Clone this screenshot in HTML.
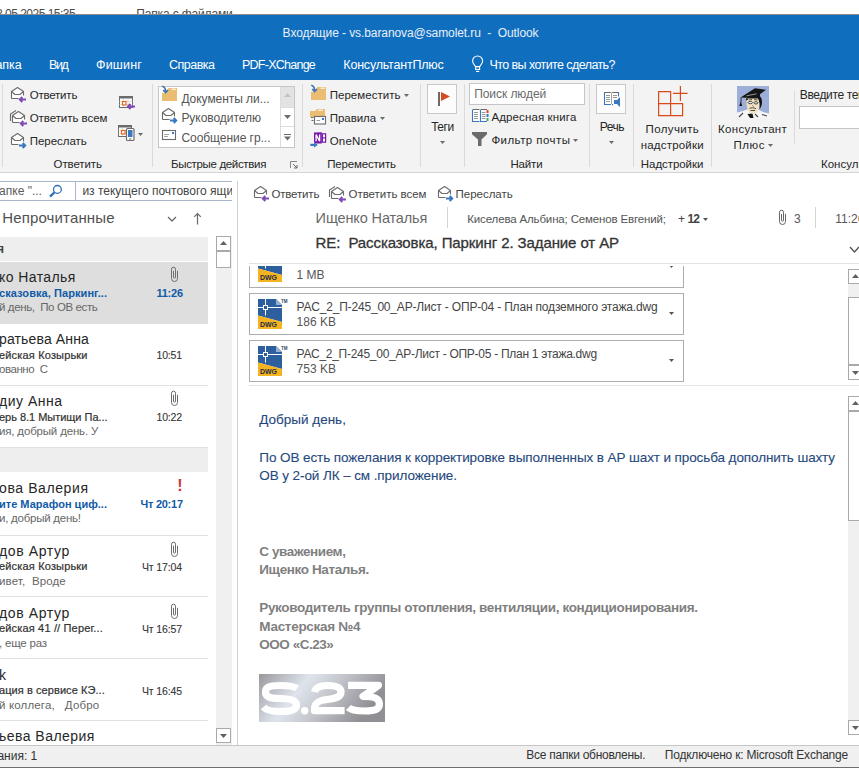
<!DOCTYPE html>
<html><head><meta charset="utf-8"><style>
html,body{margin:0;padding:0;width:859px;height:776px;overflow:hidden;background:#fff;position:relative;font-family:"Liberation Sans", sans-serif;}
.a{position:absolute;}
.t{position:absolute;white-space:pre;line-height:0;font-family:"Liberation Sans", sans-serif;}
svg.a{overflow:visible;}
</style></head><body>
<div class="a" style="left:0px;top:14px;width:859px;height:1px;background:#8c8c8c;"></div>
<div class="a" style="left:0px;top:15px;width:859px;height:65px;background:#106ebe;"></div>
<div class="a" style="left:0px;top:80px;width:859px;height:92px;background:#f3f3f3;"></div>
<div class="a" style="left:0px;top:172px;width:859px;height:1px;background:#d5d5d5;"></div>
<div class="a" style="left:2px;top:84px;width:1px;height:83px;background:#dadada;"></div>
<div class="a" style="left:152px;top:84px;width:1px;height:83px;background:#dadada;"></div>
<div class="a" style="left:302px;top:84px;width:1px;height:83px;background:#dadada;"></div>
<div class="a" style="left:420px;top:84px;width:1px;height:83px;background:#dadada;"></div>
<div class="a" style="left:464px;top:84px;width:1px;height:83px;background:#dadada;"></div>
<div class="a" style="left:589px;top:84px;width:1px;height:83px;background:#dadada;"></div>
<div class="a" style="left:633px;top:84px;width:1px;height:83px;background:#dadada;"></div>
<div class="a" style="left:711px;top:84px;width:1px;height:83px;background:#dadada;"></div>
<div class="a" style="left:794px;top:91px;width:1px;height:53px;background:#dadada;"></div>
<div class="a" style="left:158px;top:86px;width:137px;height:62px;background:#ffffff;border:1px solid #c6c6c6;box-sizing:border-box;"></div>
<div class="a" style="left:280px;top:87px;width:14px;height:20px;background:#e3e3e3;"></div>
<div class="a" style="left:280px;top:87px;width:1px;height:60px;background:#dcdcdc;"></div>
<div class="a" style="left:280px;top:107px;width:14px;height:1px;background:#dcdcdc;"></div>
<div class="a" style="left:280px;top:126px;width:14px;height:1px;background:#dcdcdc;"></div>
<div class="a" style="left:427px;top:84px;width:30px;height:30px;background:#fcfcfc;border:1px solid #c8c8c8;box-sizing:border-box;"></div>
<div class="a" style="left:469px;top:83px;width:116px;height:22px;background:#ffffff;border:1px solid #c6c6c6;box-sizing:border-box;"></div>
<div class="a" style="left:596px;top:84px;width:30px;height:30px;background:#fcfcfc;border:1px solid #c8c8c8;box-sizing:border-box;"></div>
<div class="a" style="left:799px;top:106px;width:80px;height:23px;background:#ffffff;border:1px solid #c6c6c6;box-sizing:border-box;"></div>
<div class="a" style="left:0px;top:181px;width:232px;height:1px;background:#a7b6c9;"></div>
<div class="a" style="left:0px;top:200px;width:232px;height:1px;background:#a7b6c9;"></div>
<div class="a" style="left:75px;top:181px;width:1px;height:20px;background:#a7b6c9;"></div>
<div class="a" style="left:0px;top:237px;width:208px;height:24px;background:#eeeeee;"></div>
<div class="a" style="left:0px;top:262px;width:208px;height:62px;background:#dedede;"></div>
<div class="a" style="left:0px;top:385px;width:208px;height:1px;background:#e1e1e1;"></div>
<div class="a" style="left:0px;top:447px;width:208px;height:25px;background:#eeeeee;"></div>
<div class="a" style="left:0px;top:447px;width:208px;height:1px;background:#e1e1e1;"></div>
<div class="a" style="left:0px;top:535px;width:208px;height:1px;background:#e1e1e1;"></div>
<div class="a" style="left:0px;top:596px;width:208px;height:1px;background:#e1e1e1;"></div>
<div class="a" style="left:0px;top:658px;width:208px;height:1px;background:#e1e1e1;"></div>
<div class="a" style="left:0px;top:720px;width:208px;height:1px;background:#e1e1e1;"></div>
<div class="a" style="left:216px;top:236px;width:16px;height:509px;background:#f0f0f0;"></div>
<div class="a" style="left:216px;top:236px;width:15px;height:15px;background:#ffffff;border:1px solid #a9a9a9;box-sizing:border-box;"></div>
<div class="a" style="left:216px;top:251px;width:15px;height:17px;background:#ffffff;border:1px solid #a9a9a9;box-sizing:border-box;"></div>
<div class="a" style="left:216px;top:728px;width:15px;height:15px;background:#ffffff;border:1px solid #a9a9a9;box-sizing:border-box;"></div>
<div class="a" style="left:237px;top:181px;width:1px;height:564px;background:#cfcfcf;"></div>
<div class="a" style="left:447px;top:207px;width:1px;height:21px;background:#d4d4d4;"></div>
<div class="a" style="left:815px;top:207px;width:1px;height:21px;background:#d4d4d4;"></div>
<div class="a" style="left:249px;top:263px;width:610px;height:1px;background:#e3e3e3;"></div>
<div class="a" style="left:249px;top:252px;width:435px;height:36px;background:#ffffff;border:1px solid #adadad;box-sizing:border-box;"></div>
<div class="a" style="left:249px;top:293px;width:435px;height:42px;background:#ffffff;border:1px solid #adadad;box-sizing:border-box;"></div>
<div class="a" style="left:249px;top:340px;width:435px;height:42px;background:#ffffff;border:1px solid #adadad;box-sizing:border-box;"></div>
<div class="a" style="left:848px;top:269px;width:12px;height:15px;background:#ffffff;border:1px solid #a9a9a9;box-sizing:border-box;"></div>
<div class="a" style="left:848px;top:284px;width:12px;height:13px;background:#f0f0f0;"></div>
<div class="a" style="left:848px;top:297px;width:12px;height:68px;background:#ffffff;border:1px solid #a9a9a9;box-sizing:border-box;"></div>
<div class="a" style="left:848px;top:365px;width:12px;height:15px;background:#ffffff;border:1px solid #a9a9a9;box-sizing:border-box;"></div>
<div class="a" style="left:249px;top:385px;width:610px;height:1px;background:#e3e3e3;"></div>
<svg class="a" style="left:259px;top:674px" width="126" height="48" viewBox="0 0 126 48" fill="none"><defs><linearGradient id="lg" x1="0" y1="0" x2="1" y2="0.3"><stop offset="0" stop-color="#98989c"/><stop offset="0.38" stop-color="#dfe4ec"/><stop offset="0.62" stop-color="#c5c7cd"/><stop offset="1" stop-color="#8f8f94"/></linearGradient></defs><rect width="126" height="48" fill="url(#lg)"/><g stroke="#fff" stroke-width="7.2" fill="none" stroke-linejoin="round"><path d="M38,14.5 C35,12 29,11.5 21,11.5 C10,11.5 6.5,13.5 6.5,18 C6.5,23 11,24.5 21,24.5 C32,24.5 37.5,26.5 37.5,31 C37.5,36 32,37.5 21,37.5 C11,37.5 7,36 4.5,33"/><path d="M55.5,18 C56.5,13 61,11.5 69,11.5 C78,11.5 82,13.5 82,18 C82,23 77,24.5 68,25.5 C59,26.5 55.5,29 55.5,35 V36.7 H85.6"/><path d="M89,11.3 H119.5 L104,22.5 C117,22.5 120.4,25 120.4,30 C120.4,35.5 116,37 106,37 C96,37 92,36 89.5,33.5"/></g><circle cx="45.7" cy="36.7" r="3.7" fill="#fff"/></svg>
<div class="a" style="left:848px;top:396px;width:12px;height:339px;background:#f0f0f0;"></div>
<div class="a" style="left:848px;top:396px;width:12px;height:15px;background:#ffffff;border:1px solid #a9a9a9;box-sizing:border-box;"></div>
<div class="a" style="left:848px;top:411px;width:12px;height:110px;background:#ffffff;border:1px solid #a9a9a9;box-sizing:border-box;"></div>
<div class="a" style="left:848px;top:720px;width:12px;height:15px;background:#ffffff;border:1px solid #a9a9a9;box-sizing:border-box;"></div>
<div class="a" style="left:0px;top:745px;width:859px;height:22px;background:#f0f0f0;"></div>
<div class="a" style="left:0px;top:745px;width:859px;height:1px;background:#c6c6c6;"></div>
<div class="a" style="left:0px;top:767px;width:859px;height:1px;background:#6e6e6e;"></div>
<svg class="a" style="left:10px;top:86px" width="18" height="18" viewBox="0 0 18 18" fill="none"><path d="M1.5,12.5 V5.5 L7.5,1.5 L13.5,5.5 V12.5 Z" fill="#fff"/><path d="M1.5,12.5 V5.5 L7.5,1.5 L13.5,5.5 V9.5 M1.5,12.5 H8.5 M1.5,5.5 L5,8.5 H10 L13.5,5.5" stroke="#6b6b6b" stroke-width="1.1" stroke-linejoin="round"/><path d="M10,13.5 H16 M12.3,11 L9.8,13.5 L12.3,16" stroke="#7e4bb5" stroke-width="2"/></svg>
<svg class="a" style="left:10px;top:109px" width="18" height="18" viewBox="0 0 18 18" fill="none"><g transform="translate(1,1)"><path d="M1.5,12.5 V5.5 L7.5,1.5 L13.5,5.5 V12.5 Z" fill="#fff"/><path d="M1.5,12.5 V5.5 L7.5,1.5 L13.5,5.5 V9.5 M1.5,12.5 H8.5 M1.5,5.5 L5,8.5 H10 L13.5,5.5" stroke="#6b6b6b" stroke-width="1.1" stroke-linejoin="round"/></g><path d="M0.5,12 V5 L6,1.5" stroke="#6b6b6b" stroke-width="1.1"/><path d="M11,14.5 H17 M13.3,12 L10.8,14.5 L13.3,17" stroke="#7e4bb5" stroke-width="2"/></svg>
<svg class="a" style="left:10px;top:132px" width="18" height="18" viewBox="0 0 18 18" fill="none"><path d="M1.5,12.5 V5.5 L7.5,1.5 L13.5,5.5 V12.5 Z" fill="#fff"/><path d="M1.5,12.5 V5.5 L7.5,1.5 L13.5,5.5 V9.5 M1.5,12.5 H8.5 M1.5,5.5 L5,8.5 H10 L13.5,5.5" stroke="#6b6b6b" stroke-width="1.1" stroke-linejoin="round"/><path d="M9,13.5 H15 M12.7,11 L15.2,13.5 L12.7,16" stroke="#3a77bf" stroke-width="2"/></svg>
<svg class="a" style="left:119px;top:96px" width="17" height="17" viewBox="0 0 17 17" fill="none"><rect x="0.5" y="0.5" width="13" height="11" fill="#fff" stroke="#6b6b6b"/><rect x="0" y="0" width="14" height="2.5" fill="#6b6b6b"/><path d="M4.5,2.5 V11 M9,2.5 V11 M0.5,5.5 H13.5 M0.5,8.5 H13.5" stroke="#bbb" stroke-dasharray="1,1"/><rect x="3.5" y="5.5" width="3.5" height="3.5" fill="#fff" stroke="#e06a1b" stroke-width="1.2"/><path d="M9.5,10.5 H16 M11.5,8 L9,10.5 L11.5,13" stroke="#7e4bb5" stroke-width="2"/></svg>
<svg class="a" style="left:118px;top:125px" width="17" height="17" viewBox="0 0 17 17" fill="none"><rect x="0.5" y="0.5" width="13" height="11" fill="#fff" stroke="#6b6b6b"/><rect x="0" y="0" width="14" height="2.5" fill="#6b6b6b"/><path d="M4.5,2.5 V11 M9,2.5 V11 M0.5,5.5 H13.5 M0.5,8.5 H13.5" stroke="#bbb" stroke-dasharray="1,1"/><rect x="3.5" y="5.5" width="3.5" height="3.5" fill="#fff" stroke="#e06a1b" stroke-width="1.2"/><rect x="8.5" y="3.5" width="7.5" height="12" rx="1" fill="#fff" stroke="#6b6b6b" stroke-width="1.2"/><rect x="10" y="5" width="4.5" height="7" fill="#3a77bf"/><path d="M11,14 H13.5" stroke="#6b6b6b"/></svg>
<svg class="a" style="left:138px;top:132.5px" width="5" height="3" viewBox="0 0 5 3" fill="none"><path d="M0,0 H5 L2.5,3 Z" fill="#6b6b6b"/></svg>
<svg class="a" style="left:161px;top:86px" width="17" height="16" viewBox="0 0 17 16" fill="none"><path d="M1,6.7 H5 L7.5,2 H16 V15 H1 Z" fill="#ebbd72"/><path d="M10.5,3.2 H15" stroke="#fff" stroke-width="1"/><path d="M1.2,0.2 C3.6,0.6 4.6,2.2 4.6,5.6" stroke="#3a6fb3" stroke-width="1.6" fill="none"/><path d="M2.2,4 L4.6,6.6 L7,4" stroke="#3a6fb3" stroke-width="1.6" fill="none"/></svg>
<svg class="a" style="left:161px;top:107px" width="18" height="18" viewBox="0 0 18 18" fill="none"><path d="M1.5,12.5 V5.5 L7.5,1.5 L13.5,5.5 V12.5 Z" fill="#fff"/><path d="M1.5,12.5 V5.5 L7.5,1.5 L13.5,5.5 V9.5 M1.5,12.5 H8.5 M1.5,5.5 L5,8.5 H10 L13.5,5.5" stroke="#6b6b6b" stroke-width="1.1" stroke-linejoin="round"/><path d="M9,13.5 H15 M12.7,11 L15.2,13.5 L12.7,16" stroke="#3a77bf" stroke-width="2"/></svg>
<svg class="a" style="left:162px;top:130px" width="15" height="11" viewBox="0 0 15 11" fill="none"><rect x="0.5" y="0.5" width="13" height="9" stroke="#6b6b6b" stroke-width="1.1" fill="#fff"/><rect x="10" y="2" width="2" height="2" fill="#3a77bf"/><path d="M2,4.5 H7 M2,6.5 H6" stroke="#999" stroke-width="0.9"/></svg>
<svg class="a" style="left:284px;top:93px" width="7" height="4" viewBox="0 0 7 4" fill="none"><path d="M0,4 H7 L3.5,0 Z" fill="#c4c4c4"/></svg>
<svg class="a" style="left:284px;top:115px" width="7" height="4" viewBox="0 0 7 4" fill="none"><path d="M0,0 H7 L3.5,4 Z" fill="#6b6b6b"/></svg>
<svg class="a" style="left:284px;top:134px" width="7" height="7" viewBox="0 0 7 7" fill="none"><path d="M0,0.5 H7" stroke="#6b6b6b"/><path d="M0,2.5 H7 L3.5,6.5 Z" fill="#6b6b6b"/></svg>
<svg class="a" style="left:290px;top:161px" width="8" height="8" viewBox="0 0 8 8" fill="none"><path d="M0.5,7 V0.5 H7" stroke="#888"/><path d="M3,3 L7,7 M7,4 V7 H4" stroke="#666"/></svg>
<svg class="a" style="left:310px;top:85px" width="17" height="16" viewBox="0 0 17 16" fill="none"><path d="M1,6.7 H5 L7.5,2 H16 V15 H1 Z" fill="#ebbd72"/><path d="M10.5,3.2 H15" stroke="#fff" stroke-width="1"/><path d="M1.2,0.2 C3.6,0.6 4.6,2.2 4.6,5.6" stroke="#3a6fb3" stroke-width="1.6" fill="none"/><path d="M2.2,4 L4.6,6.6 L7,4" stroke="#3a6fb3" stroke-width="1.6" fill="none"/></svg>
<svg class="a" style="left:404px;top:94px" width="5" height="3" viewBox="0 0 5 3" fill="none"><path d="M0,0 H5 L2.5,3 Z" fill="#6b6b6b"/></svg>
<svg class="a" style="left:310px;top:108px" width="16" height="17" viewBox="0 0 16 17" fill="none"><path d="M0,3 H5 L7,1 H15 V9 H0 Z" fill="#ebbd72"/><path d="M8,2.2 H13" stroke="#fff"/><rect x="4.5" y="8.5" width="11" height="7.5" fill="#fff" stroke="#6b6b6b" stroke-width="1.1"/><path d="M6.5,12.5 H10" stroke="#999"/><rect x="12" y="10" width="2" height="2" fill="#3a77bf"/><path d="M1,9.5 H3.5 M1.5,12.5 H3.5" stroke="#6b6b6b" stroke-width="1.2"/></svg>
<svg class="a" style="left:380px;top:117px" width="5" height="3" viewBox="0 0 5 3" fill="none"><path d="M0,0 H5 L2.5,3 Z" fill="#6b6b6b"/></svg>
<svg class="a" style="left:310px;top:132px" width="17" height="17" viewBox="0 0 17 17" fill="none"><path d="M4,0.5 L11.8,0.2 V11.6 H6.5 C5,11.6 4,10.6 4,9.5 Z" fill="#7719aa"/><rect x="12.4" y="1.8" width="3.2" height="8.4" fill="#fff" stroke="#7719aa" stroke-width="1.2"/><path d="M12,5.9 H16" stroke="#7719aa" stroke-width="1.2"/><path d="M6.1,9.3 V2.6 L9.6,9.3 V2.6" stroke="#fff" stroke-width="1.3" fill="none"/><path d="M0.3,12.9 H5.5" stroke="#3a77bf" stroke-width="2.2"/><path d="M4,10.2 L7.9,12.9 L4,15.6 Z" fill="#3a77bf"/></svg>
<svg class="a" style="left:471px;top:55px" width="14" height="18" viewBox="0 0 14 18" fill="none"><path d="M4.6,11.6 C3.5,9.8 1.6,8.6 1.6,6 A5,5 0 0 1 11.6,6 C11.6,8.6 9.7,9.8 8.6,11.6 Z" stroke="#fff" stroke-width="1.1"/><rect x="4.6" y="11.6" width="4" height="2.9" stroke="#fff" stroke-width="1.1"/><path d="M5,16.5 H8.2" stroke="#fff" stroke-width="1.1"/></svg>
<svg class="a" style="left:438px;top:92px" width="14" height="16" viewBox="0 0 14 16" fill="none"><rect x="0" y="0" width="2" height="14" fill="#6b6b6b"/><path d="M3,0 L12,4.5 L3,9 Z" fill="#d54a23"/></svg>
<svg class="a" style="left:440px;top:141px" width="5" height="3" viewBox="0 0 5 3" fill="none"><path d="M0,0 H5 L2.5,3 Z" fill="#6b6b6b"/></svg>
<svg class="a" style="left:472px;top:109px" width="17" height="13" viewBox="0 0 17 13" fill="none"><rect x="0.5" y="0.5" width="7" height="12" fill="#fff"/><rect x="8.5" y="0.5" width="7" height="12" fill="#fff"/><path d="M0.5,1 V12.5 H7.5 M8.5,1 V12.5 H15" stroke="#3a77bf" stroke-width="1.1"/><path d="M0.5,0.5 H7.5 M8.5,0.5 H15" stroke="#6b6b6b" stroke-width="1.1"/><path d="M2,3.5 H6 M2,5.5 H6 M2,7.5 H6 M2,9.5 H6 M9.8,3.5 H13.5 M9.8,5.5 H13.5 M9.8,7.5 H13.5 M9.8,9.5 H13.5" stroke="#8a8a8a" stroke-width="0.9"/><rect x="14.5" y="1" width="2" height="3" fill="#d54a23"/><rect x="14.5" y="5" width="2" height="3" fill="#3a77bf"/><rect x="14.5" y="9" width="2" height="3" fill="#4ea172"/></svg>
<svg class="a" style="left:472px;top:132px" width="16" height="15" viewBox="0 0 16 15" fill="none"><path d="M0,0 H15 V2.2 L9.5,7.5 V14 H6 V7.5 L0,2.2 Z" fill="#6b6b6b"/></svg>
<svg class="a" style="left:573px;top:139px" width="5" height="3" viewBox="0 0 5 3" fill="none"><path d="M0,0 H5 L2.5,3 Z" fill="#6b6b6b"/></svg>
<svg class="a" style="left:603px;top:91px" width="18" height="17" viewBox="0 0 18 17" fill="none"><rect x="1" y="1.5" width="14.5" height="12" fill="#fff"/><path d="M1,1.5 H7.8 M9.2,1.5 H16" stroke="#6b6b6b" stroke-width="1"/><path d="M1.5,1.5 V13.5 H8" stroke="#3a77bf" stroke-width="1.1"/><path d="M8.5,1.5 V13" stroke="#9a9a9a" stroke-width="0.9"/><path d="M15.5,1.5 V5.5" stroke="#3a77bf" stroke-width="1.1"/><path d="M3,4.5 H7 M3,6.5 H7 M3,8.5 H7 M3,10.5 H7 M10,4.5 H14 M10,6.5 H14" stroke="#8a8a8a" stroke-width="0.9"/><path d="M11,9 H14 L17,6 V16 L14,13 H11 Z" fill="#3a77bf"/><rect x="9" y="13" width="1.2" height="1.2" fill="#3a77bf"/></svg>
<svg class="a" style="left:609px;top:141px" width="5" height="3" viewBox="0 0 5 3" fill="none"><path d="M0,0 H5 L2.5,3 Z" fill="#6b6b6b"/></svg>
<svg class="a" style="left:658px;top:91px" width="31" height="26" viewBox="0 0 31 26" fill="none"><path d="M0.6,0.6 H12.6 V12.6 H0.6 Z M0.6,12.6 V24.6 H12.6 V12.6 M12.6,12.6 H24.6 V24.6 H12.6" stroke="#d84a1b" stroke-width="1.2"/><path d="M15,2.4 H29.6 M22.4,-5 V10" stroke="#d84a1b" stroke-width="1.2"/></svg>
<svg class="a" style="left:737px;top:86px" width="32" height="32" viewBox="0 0 32 32" fill="none"><rect x="0" y="0" width="32" height="32" fill="#9dafd9"/><path d="M0,26.5 L6,25 L10,23.5 H21 L26,26 L32,27.5 V32 H0 Z" fill="#f6f6f6"/><path d="M10.5,28 L13,32 H16.5 L15.5,27.5 Z" fill="#151515"/><path d="M2,31 L6,27 M18,28 L21,31 M25,28.5 L30,30" stroke="#444" stroke-width="1.1"/><path d="M9.5,12 C9.5,9 12,8.5 16,8.5 C20,8.5 22.8,10 22.8,14 C22.8,21 21.5,27.5 16,27.5 C11.5,27.5 9.5,23 9.5,16 Z" fill="#f2e2c2"/><path d="M20.5,9 C23.5,9.5 25,12 25,16 C25,19 24,21.5 22.5,23 C23,19 22.5,15 21,12.5 Z" fill="#111"/><path d="M9,12 L11.5,13.5 L9.2,14.5 Z" fill="#111"/><path d="M3.5,11.5 L18,2.2 L29,3.8 L20.5,10 L9,11.8 Z" fill="#161616"/><path d="M10,12.5 H23 V8 H10 Z" fill="#161616"/><path d="M9.5,9.8 L19.5,7.8" stroke="#b5b5b5" stroke-width="0.8"/><path d="M4,11.5 V16.5" stroke="#111" stroke-width="0.8"/><path d="M2.2,19.9 L3.9,15.5 L5.2,19.9 Z" fill="#111"/><path d="M11,16.5 C11,15 15.5,15 15.5,16.5 C15.5,18.2 11,18.2 11,16.5 Z M16.8,16.8 C16.8,15.3 21,15.3 21,16.8 C21,18.4 16.8,18.4 16.8,16.8 Z" fill="#e8ecef" stroke="#333" stroke-width="0.9"/><path d="M12,14 L15,13.5 M17,13.5 L20.5,14 M15.5,19.5 L16.5,20.5 M12.5,22.5 C14,21.5 17,21.5 19,22.8 M13.5,24.5 L18,24.5" stroke="#3a3a3a" stroke-width="0.9"/></svg>
<svg class="a" style="left:768px;top:144px" width="5" height="3" viewBox="0 0 5 3" fill="none"><path d="M0,0 H5 L2.5,3 Z" fill="#6b6b6b"/></svg>
<svg class="a" style="left:49px;top:184px" width="14" height="14" viewBox="0 0 14 14" fill="none"><circle cx="8.4" cy="5.4" r="3.9" stroke="#2e6db4" stroke-width="1.3"/><path d="M5.6,8.2 L1,12.6" stroke="#2e6db4" stroke-width="2.2"/></svg>
<svg class="a" style="left:167px;top:216px" width="10" height="7" viewBox="0 0 10 7" fill="none"><path d="M1,1 L5,5 L9,1" stroke="#6a6a6a" stroke-width="1.3"/></svg>
<svg class="a" style="left:193px;top:212px" width="9" height="13" viewBox="0 0 9 13" fill="none"><path d="M4.5,1.5 V12.5 M1.2,4.8 L4.5,1.5 L7.8,4.8" stroke="#6a6a6a" stroke-width="1.2"/></svg>
<svg class="a" style="left:170px;top:266px" width="9" height="17" viewBox="0 0 9 17" fill="none"><path d="M3.5,4.8 V11.2 A1,1 0 0 0 5.5,11.2 V3.2 A2,2 0 0 0 1.5,3.2 V12.5 A3,3 0 0 0 7.5,12.5 V4.8" stroke="#6d6d6d" stroke-width="1"/></svg>
<svg class="a" style="left:170px;top:390px" width="9" height="17" viewBox="0 0 9 17" fill="none"><path d="M3.5,4.8 V11.2 A1,1 0 0 0 5.5,11.2 V3.2 A2,2 0 0 0 1.5,3.2 V12.5 A3,3 0 0 0 7.5,12.5 V4.8" stroke="#6d6d6d" stroke-width="1"/></svg>
<svg class="a" style="left:170px;top:541px" width="9" height="17" viewBox="0 0 9 17" fill="none"><path d="M3.5,4.8 V11.2 A1,1 0 0 0 5.5,11.2 V3.2 A2,2 0 0 0 1.5,3.2 V12.5 A3,3 0 0 0 7.5,12.5 V4.8" stroke="#6d6d6d" stroke-width="1"/></svg>
<svg class="a" style="left:170px;top:603px" width="9" height="17" viewBox="0 0 9 17" fill="none"><path d="M3.5,4.8 V11.2 A1,1 0 0 0 5.5,11.2 V3.2 A2,2 0 0 0 1.5,3.2 V12.5 A3,3 0 0 0 7.5,12.5 V4.8" stroke="#6d6d6d" stroke-width="1"/></svg>
<svg class="a" style="left:220px;top:241px" width="7" height="4" viewBox="0 0 7 4" fill="none"><path d="M0,4 H7 L3.5,0 Z" fill="#606060"/></svg>
<svg class="a" style="left:220px;top:734px" width="7" height="4" viewBox="0 0 7 4" fill="none"><path d="M0,0 H7 L3.5,4 Z" fill="#606060"/></svg>
<svg class="a" style="left:253px;top:185px" width="18" height="18" viewBox="0 0 18 18" fill="none"><path d="M1.5,12.5 V5.5 L7.5,1.5 L13.5,5.5 V12.5 Z" fill="#fff"/><path d="M1.5,12.5 V5.5 L7.5,1.5 L13.5,5.5 V9.5 M1.5,12.5 H8.5 M1.5,5.5 L5,8.5 H10 L13.5,5.5" stroke="#6b6b6b" stroke-width="1.1" stroke-linejoin="round"/><path d="M10,13.5 H16 M12.3,11 L9.8,13.5 L12.3,16" stroke="#7e4bb5" stroke-width="2"/></svg>
<svg class="a" style="left:329px;top:185px" width="18" height="18" viewBox="0 0 18 18" fill="none"><g transform="translate(1,1)"><path d="M1.5,12.5 V5.5 L7.5,1.5 L13.5,5.5 V12.5 Z" fill="#fff"/><path d="M1.5,12.5 V5.5 L7.5,1.5 L13.5,5.5 V9.5 M1.5,12.5 H8.5 M1.5,5.5 L5,8.5 H10 L13.5,5.5" stroke="#6b6b6b" stroke-width="1.1" stroke-linejoin="round"/></g><path d="M0.5,12 V5 L6,1.5" stroke="#6b6b6b" stroke-width="1.1"/><path d="M11,14.5 H17 M13.3,12 L10.8,14.5 L13.3,17" stroke="#7e4bb5" stroke-width="2"/></svg>
<svg class="a" style="left:437px;top:185px" width="18" height="18" viewBox="0 0 18 18" fill="none"><path d="M1.5,12.5 V5.5 L7.5,1.5 L13.5,5.5 V12.5 Z" fill="#fff"/><path d="M1.5,12.5 V5.5 L7.5,1.5 L13.5,5.5 V9.5 M1.5,12.5 H8.5 M1.5,5.5 L5,8.5 H10 L13.5,5.5" stroke="#6b6b6b" stroke-width="1.1" stroke-linejoin="round"/><path d="M9,13.5 H15 M12.7,11 L15.2,13.5 L12.7,16" stroke="#3a77bf" stroke-width="2"/></svg>
<svg class="a" style="left:703px;top:218px" width="5" height="3" viewBox="0 0 5 3" fill="none"><path d="M0,0 H5 L2.5,3 Z" fill="#555"/></svg>
<svg class="a" style="left:778px;top:209px" width="9" height="17" viewBox="0 0 9 17" fill="none"><path d="M3.5,4.8 V11.2 A1,1 0 0 0 5.5,11.2 V3.2 A2,2 0 0 0 1.5,3.2 V12.5 A3,3 0 0 0 7.5,12.5 V4.8" stroke="#666" stroke-width="1"/></svg>
<svg class="a" style="left:849px;top:246px" width="11" height="8" viewBox="0 0 11 8" fill="none"><path d="M1,1 L5.5,6 L10,1" stroke="#555" stroke-width="1.4"/></svg>
<svg class="a" style="left:258px;top:251.5px" width="30" height="31" viewBox="0 0 30 31" fill="none"><path d="M0,0 H18 L24,6 V23 L0,16.5 Z" fill="#2d5f9f"/><path d="M0,16.5 L24,23 V30 H0 Z" fill="#f4b41f"/><path d="M18,0 L24,6 H18 Z" fill="#93b1d6"/><path d="M7.5,0 V16.5 M0,8.5 H24" stroke="#fff" stroke-width="1"/><rect x="5.5" y="6.5" width="4" height="4" fill="#2d5f9f" stroke="#fff" stroke-width="1"/><text x="2" y="28.2" font-family="Liberation Sans" font-weight="700" font-size="7.6" fill="#1e2b48" textLength="17" lengthAdjust="spacingAndGlyphs">DWG</text><text x="23" y="3.8" font-family="Liberation Sans" font-weight="700" font-size="4.5" fill="#33435c">TM</text></svg>
<svg class="a" style="left:669px;top:264.5px" width="5" height="3" viewBox="0 0 5 3" fill="none"><path d="M0,0 H5 L2.5,3 Z" fill="#555"/></svg>
<svg class="a" style="left:258px;top:298.5px" width="30" height="31" viewBox="0 0 30 31" fill="none"><path d="M0,0 H18 L24,6 V23 L0,16.5 Z" fill="#2d5f9f"/><path d="M0,16.5 L24,23 V30 H0 Z" fill="#f4b41f"/><path d="M18,0 L24,6 H18 Z" fill="#93b1d6"/><path d="M7.5,0 V16.5 M0,8.5 H24" stroke="#fff" stroke-width="1"/><rect x="5.5" y="6.5" width="4" height="4" fill="#2d5f9f" stroke="#fff" stroke-width="1"/><text x="2" y="28.2" font-family="Liberation Sans" font-weight="700" font-size="7.6" fill="#1e2b48" textLength="17" lengthAdjust="spacingAndGlyphs">DWG</text><text x="23" y="3.8" font-family="Liberation Sans" font-weight="700" font-size="4.5" fill="#33435c">TM</text></svg>
<svg class="a" style="left:669px;top:311.5px" width="5" height="3" viewBox="0 0 5 3" fill="none"><path d="M0,0 H5 L2.5,3 Z" fill="#555"/></svg>
<svg class="a" style="left:258px;top:345.5px" width="30" height="31" viewBox="0 0 30 31" fill="none"><path d="M0,0 H18 L24,6 V23 L0,16.5 Z" fill="#2d5f9f"/><path d="M0,16.5 L24,23 V30 H0 Z" fill="#f4b41f"/><path d="M18,0 L24,6 H18 Z" fill="#93b1d6"/><path d="M7.5,0 V16.5 M0,8.5 H24" stroke="#fff" stroke-width="1"/><rect x="5.5" y="6.5" width="4" height="4" fill="#2d5f9f" stroke="#fff" stroke-width="1"/><text x="2" y="28.2" font-family="Liberation Sans" font-weight="700" font-size="7.6" fill="#1e2b48" textLength="17" lengthAdjust="spacingAndGlyphs">DWG</text><text x="23" y="3.8" font-family="Liberation Sans" font-weight="700" font-size="4.5" fill="#33435c">TM</text></svg>
<svg class="a" style="left:669px;top:358.5px" width="5" height="3" viewBox="0 0 5 3" fill="none"><path d="M0,0 H5 L2.5,3 Z" fill="#555"/></svg>
<svg class="a" style="left:852px;top:274px" width="7" height="4" viewBox="0 0 7 4" fill="none"><path d="M0,4 H7 L3.5,0 Z" fill="#606060"/></svg>
<svg class="a" style="left:852px;top:371px" width="7" height="4" viewBox="0 0 7 4" fill="none"><path d="M0,0 H7 L3.5,4 Z" fill="#606060"/></svg>
<svg class="a" style="left:852px;top:401px" width="7" height="4" viewBox="0 0 7 4" fill="none"><path d="M0,4 H7 L3.5,0 Z" fill="#606060"/></svg>
<svg class="a" style="left:852px;top:726px" width="7" height="4" viewBox="0 0 7 4" fill="none"><path d="M0,0 H7 L3.5,4 Z" fill="#606060"/></svg>
<div class="a" style="left:0px;top:0px;width:859px;height:14px;overflow:hidden"><div class="t" style="left:-4.00px;top:14.34px;font-size:12px;color:#4a4a4a;letter-spacing:-0.504px;">2.05.2025 15:35</div></div>
<div class="a" style="left:0px;top:0px;width:859px;height:14px;overflow:hidden"><div class="t" style="left:136.20px;top:14.34px;font-size:12px;color:#4a4a4a;letter-spacing:-0.138px;">Папка с файлами</div></div>
<div class="t" style="left:282.60px;top:32.84px;font-size:12px;color:#e8f0fa;letter-spacing:-0.087px;">Входящие - vs.baranova@samolet.ru  -  Outlook</div>
<div class="t" style="left:-4.62px;top:64.97px;font-size:12.5px;color:#ffffff;">апка</div>
<div class="t" style="left:49.00px;top:64.97px;font-size:12.5px;color:#ffffff;letter-spacing:-1.412px;">Вид</div>
<div class="t" style="left:96.00px;top:64.97px;font-size:12.5px;color:#ffffff;letter-spacing:0.166px;">Фишинг</div>
<div class="t" style="left:169.00px;top:64.97px;font-size:12.5px;color:#ffffff;letter-spacing:-0.508px;">Справка</div>
<div class="t" style="left:242.00px;top:64.97px;font-size:12.5px;color:#ffffff;letter-spacing:-0.750px;">PDF-XChange</div>
<div class="t" style="left:343.30px;top:64.97px;font-size:12.5px;color:#ffffff;letter-spacing:-0.198px;">КонсультантПлюс</div>
<div class="t" style="left:489.50px;top:64.97px;font-size:12.5px;color:#ffffff;letter-spacing:-0.580px;">Что вы хотите сделать?</div>
<div class="t" style="left:29.70px;top:95.02px;font-size:11.5px;color:#262626;letter-spacing:-0.208px;">Ответить</div>
<div class="t" style="left:29.70px;top:118.02px;font-size:11.5px;color:#262626;letter-spacing:-0.058px;">Ответить всем</div>
<div class="t" style="left:29.70px;top:140.52px;font-size:11.5px;color:#262626;letter-spacing:-0.029px;">Переслать</div>
<div class="t" style="left:53.60px;top:164.22px;font-size:11.5px;color:#262626;letter-spacing:-0.108px;">Ответить</div>
<div class="t" style="left:181.40px;top:98.54px;font-size:12px;color:#555555;letter-spacing:-0.050px;">Документы ли...</div>
<div class="t" style="left:181.40px;top:117.84px;font-size:12px;color:#555555;letter-spacing:-0.051px;">Руководителю</div>
<div class="t" style="left:181.40px;top:137.84px;font-size:12px;color:#555555;letter-spacing:-0.043px;">Сообщение гр...</div>
<div class="t" style="left:171.00px;top:164.22px;font-size:11.5px;color:#262626;letter-spacing:-0.333px;">Быстрые действия</div>
<div class="t" style="left:329.70px;top:95.22px;font-size:11.5px;color:#262626;letter-spacing:0.033px;">Переместить</div>
<div class="t" style="left:329.70px;top:117.62px;font-size:11.5px;color:#262626;letter-spacing:-0.034px;">Правила</div>
<div class="t" style="left:329.70px;top:140.92px;font-size:11.5px;color:#262626;letter-spacing:0.178px;">OneNote</div>
<div class="t" style="left:327.20px;top:164.22px;font-size:11.5px;color:#262626;letter-spacing:-0.167px;">Переместить</div>
<div class="t" style="left:431.20px;top:127.04px;font-size:12px;color:#262626;letter-spacing:-0.474px;">Теги</div>
<div class="t" style="left:474.20px;top:93.64px;font-size:12px;color:#6a6a6a;letter-spacing:-0.060px;">Поиск людей</div>
<div class="t" style="left:491.40px;top:117.32px;font-size:11.5px;color:#262626;letter-spacing:0.127px;">Адресная книга</div>
<div class="t" style="left:491.40px;top:139.92px;font-size:11.5px;color:#262626;letter-spacing:0.442px;">Фильтр почты</div>
<div class="t" style="left:510.40px;top:164.22px;font-size:11.5px;color:#262626;letter-spacing:-0.132px;">Найти</div>
<div class="t" style="left:599.80px;top:127.04px;font-size:12px;color:#262626;letter-spacing:-0.489px;">Речь</div>
<div class="t" style="left:645.50px;top:129.32px;font-size:11.5px;color:#262626;letter-spacing:0.393px;">Получить</div>
<div class="t" style="left:640.70px;top:144.82px;font-size:11.5px;color:#262626;letter-spacing:0.194px;">надстройки</div>
<div class="t" style="left:640.80px;top:164.22px;font-size:11.5px;color:#262626;letter-spacing:-0.057px;">Надстройки</div>
<div class="t" style="left:718.00px;top:129.32px;font-size:11.5px;color:#262626;letter-spacing:0.314px;">Консультант</div>
<div class="t" style="left:733.40px;top:144.82px;font-size:11.5px;color:#262626;letter-spacing:0.614px;">Плюс</div>
<div class="t" style="left:799.80px;top:95.04px;font-size:12px;color:#262626;letter-spacing:-0.35px;">Введите текст</div>
<div class="t" style="left:821.00px;top:164.22px;font-size:11.5px;color:#262626;">КонсультантПлюс</div>
<div class="t" style="left:-0.93px;top:191.14px;font-size:12px;color:#5a5a5a;">апке &quot;...</div>
<div class="a" style="left:76px;top:182px;width:156px;height:18px;overflow:hidden"><div class="t" style="left:6.40px;top:9.14px;font-size:12px;color:#444444;">из текущего почтового ящика</div></div>
<div class="t" style="left:2.20px;top:218.10px;font-size:15px;color:#505050;letter-spacing:0.151px;">Непрочитанные</div>
<div class="t" style="left:-3.12px;top:248.74px;font-size:12px;color:#444444;font-weight:700;">я</div>
<div class="t" style="left:-1.00px;top:277.45px;font-size:14px;color:#262626;letter-spacing:0.418px;">ко Наталья</div>
<div class="t" style="left:-1.00px;top:293.19px;font-size:11px;color:#105aa8;font-weight:700;letter-spacing:0.074px;">сказовка, Паркинг...</div>
<div class="t" style="left:156.50px;top:293.19px;font-size:11px;color:#105aa8;font-weight:700;letter-spacing:-0.258px;">11:26</div>
<div class="t" style="left:-1.00px;top:307.02px;font-size:11.5px;color:#666666;letter-spacing:-0.385px;">й день,  По ОВ есть</div>
<div class="t" style="left:-1.00px;top:339.45px;font-size:14px;color:#262626;letter-spacing:0.144px;">ратьева Анна</div>
<div class="t" style="left:-1.00px;top:354.89px;font-size:11px;color:#333333;letter-spacing:0.171px;-webkit-text-stroke:0.22px #333;">ейская Козырьки</div>
<div class="t" style="left:156.50px;top:355.06px;font-size:10.5px;color:#333333;letter-spacing:-0.195px;-webkit-text-stroke:0.1px #333;">10:51</div>
<div class="t" style="left:-1.00px;top:369.02px;font-size:11.5px;color:#666666;letter-spacing:-0.447px;">ованно  С</div>
<div class="t" style="left:-1.00px;top:401.45px;font-size:14px;color:#262626;letter-spacing:0.504px;">диу Анна</div>
<div class="t" style="left:-1.00px;top:416.89px;font-size:11px;color:#333333;letter-spacing:-0.025px;-webkit-text-stroke:0.22px #333;">ерь 8.1 Мытищи Па...</div>
<div class="t" style="left:156.50px;top:417.06px;font-size:10.5px;color:#333333;letter-spacing:-0.195px;-webkit-text-stroke:0.1px #333;">10:22</div>
<div class="t" style="left:-1.00px;top:431.02px;font-size:11.5px;color:#666666;letter-spacing:-0.169px;">ия, добрый день. У</div>
<div class="t" style="left:-1.00px;top:488.45px;font-size:14px;color:#262626;letter-spacing:0.598px;">ова Валерия</div>
<div class="t" style="left:-1.00px;top:504.19px;font-size:11px;color:#105aa8;font-weight:700;letter-spacing:0.012px;">ите Марафон циф...</div>
<div class="t" style="left:140.50px;top:504.19px;font-size:11px;color:#105aa8;font-weight:700;letter-spacing:-0.259px;">Чт 20:17</div>
<div class="t" style="left:-1.00px;top:518.02px;font-size:11.5px;color:#666666;letter-spacing:-0.246px;">и, добрый день!</div>
<div class="t" style="left:-1.00px;top:550.95px;font-size:14px;color:#262626;letter-spacing:0.625px;">дов Артур</div>
<div class="t" style="left:-1.00px;top:566.39px;font-size:11px;color:#333333;letter-spacing:0.171px;-webkit-text-stroke:0.22px #333;">ейская Козырьки</div>
<div class="t" style="left:142.00px;top:566.56px;font-size:10.5px;color:#333333;letter-spacing:-0.145px;-webkit-text-stroke:0.1px #333;">Чт 17:04</div>
<div class="t" style="left:-1.00px;top:580.52px;font-size:11.5px;color:#666666;letter-spacing:0.126px;">ивет,  Вроде</div>
<div class="t" style="left:-1.00px;top:612.95px;font-size:14px;color:#262626;letter-spacing:0.625px;">дов Артур</div>
<div class="t" style="left:-1.00px;top:628.39px;font-size:11px;color:#333333;letter-spacing:0.164px;-webkit-text-stroke:0.22px #333;">ейская 41 // Перег...</div>
<div class="t" style="left:142.00px;top:628.56px;font-size:10.5px;color:#333333;letter-spacing:-0.145px;-webkit-text-stroke:0.1px #333;">Чт 16:57</div>
<div class="t" style="left:-1.00px;top:642.52px;font-size:11.5px;color:#666666;letter-spacing:-0.207px;">, еще раз</div>
<div class="t" style="left:-1.00px;top:674.95px;font-size:14px;color:#262626;">k</div>
<div class="t" style="left:-1.00px;top:690.39px;font-size:11px;color:#333333;letter-spacing:0.076px;-webkit-text-stroke:0.22px #333;">ация в сервисе КЭ...</div>
<div class="t" style="left:142.00px;top:690.56px;font-size:10.5px;color:#333333;letter-spacing:-0.145px;-webkit-text-stroke:0.1px #333;">Чт 16:45</div>
<div class="t" style="left:-1.00px;top:704.52px;font-size:11.5px;color:#666666;letter-spacing:0.155px;">й коллега,   Добро</div>
<div class="t" style="left:-1.00px;top:735.95px;font-size:14px;color:#262626;letter-spacing:0.463px;">ьева Валерия</div>
<div class="t" style="left:271.40px;top:193.82px;font-size:11.5px;color:#444444;letter-spacing:-0.165px;">Ответить</div>
<div class="t" style="left:348.50px;top:193.82px;font-size:11.5px;color:#444444;letter-spacing:-0.033px;">Ответить всем</div>
<div class="t" style="left:455.60px;top:193.82px;font-size:11.5px;color:#444444;letter-spacing:-0.029px;">Переслать</div>
<div class="t" style="left:315.60px;top:217.68px;font-size:14.5px;color:#6a6a6a;letter-spacing:-0.131px;">Ищенко Наталья</div>
<div class="t" style="left:467.30px;top:218.92px;font-size:11.5px;color:#555555;letter-spacing:-0.150px;">Киселева Альбина; Семенов Евгений;</div>
<div class="t" style="left:678.00px;top:218.74px;font-size:12px;color:#444444;">+</div>
<div class="t" style="left:687.50px;top:218.74px;font-size:12px;color:#444444;font-weight:700;letter-spacing:-0.859px;">12</div>
<div class="t" style="left:794.00px;top:218.64px;font-size:12px;color:#555555;">3</div>
<div class="t" style="left:835.30px;top:218.64px;font-size:12px;color:#555555;">11:26</div>
<div class="t" style="left:315.60px;top:242.60px;font-size:15px;color:#333333;letter-spacing:-0.100px;-webkit-text-stroke:0.3px #333;">RE:  Рассказовка, Паркинг 2. Задание от АР</div>
<div class="t" style="left:296.60px;top:275.14px;font-size:12px;color:#555555;">1 MB</div>
<div class="t" style="left:296.60px;top:307.04px;font-size:12px;color:#444444;letter-spacing:-0.180px;">РАС_2_П-245_00_АР-Лист - ОПР-04 - План подземного этажа.dwg</div>
<div class="t" style="left:296.60px;top:322.14px;font-size:12px;color:#555555;">186 KB</div>
<div class="t" style="left:296.60px;top:354.04px;font-size:12px;color:#444444;letter-spacing:-0.274px;">РАС_2_П-245_00_АР-Лист - ОПР-05 - План 1 этажа.dwg</div>
<div class="t" style="left:296.60px;top:369.14px;font-size:12px;color:#555555;">753 KB</div>
<div class="t" style="left:259.30px;top:419.72px;font-size:13.5px;color:#1f497d;letter-spacing:-0.007px;-webkit-text-stroke:0.1px #1f497d;">Добрый день,</div>
<div class="t" style="left:259.30px;top:457.72px;font-size:13.5px;color:#1f497d;letter-spacing:-0.092px;-webkit-text-stroke:0.1px #1f497d;">По ОВ есть пожелания к корректировке выполненных в АР шахт и просьба дополнить шахту</div>
<div class="t" style="left:259.30px;top:475.62px;font-size:13.5px;color:#1f497d;letter-spacing:-0.092px;-webkit-text-stroke:0.1px #1f497d;">ОВ у 2-ой ЛК – см .приложение.</div>
<div class="t" style="left:259.30px;top:551.72px;font-size:13.5px;color:#7f7f7f;font-weight:700;letter-spacing:-0.406px;">С уважением,</div>
<div class="t" style="left:259.30px;top:570.32px;font-size:13.5px;color:#7f7f7f;font-weight:700;letter-spacing:-0.380px;">Ищенко Наталья.</div>
<div class="t" style="left:259.30px;top:607.82px;font-size:13.5px;color:#7f7f7f;font-weight:700;letter-spacing:-0.344px;">Руководитель группы отопления, вентиляции, кондиционирования.</div>
<div class="t" style="left:259.30px;top:626.52px;font-size:13.5px;color:#7f7f7f;font-weight:700;letter-spacing:-0.289px;">Мастерская №4</div>
<div class="t" style="left:259.30px;top:645.12px;font-size:13.5px;color:#7f7f7f;font-weight:700;letter-spacing:-0.477px;">ООО «С.23»</div>
<div class="t" style="left:-2.64px;top:755.64px;font-size:12px;color:#333333;">ания: 1</div>
<div class="t" style="left:526.30px;top:754.94px;font-size:12px;color:#333333;letter-spacing:-0.262px;">Все папки обновлены.</div>
<div class="t" style="left:664.80px;top:755.34px;font-size:12px;color:#333333;letter-spacing:-0.214px;">Подключено к: Microsoft Exchange</div>
<div class="t" style="left:177.17px;top:485.96px;font-size:16px;color:#d13438;font-weight:700;">!</div>
<div class="a" style="left:240px;top:252px;width:608px;height:14px;background:#ffffff;"></div>
<div class="a" style="left:249px;top:263px;width:599px;height:1px;background:#e3e3e3;"></div>
</body></html>
